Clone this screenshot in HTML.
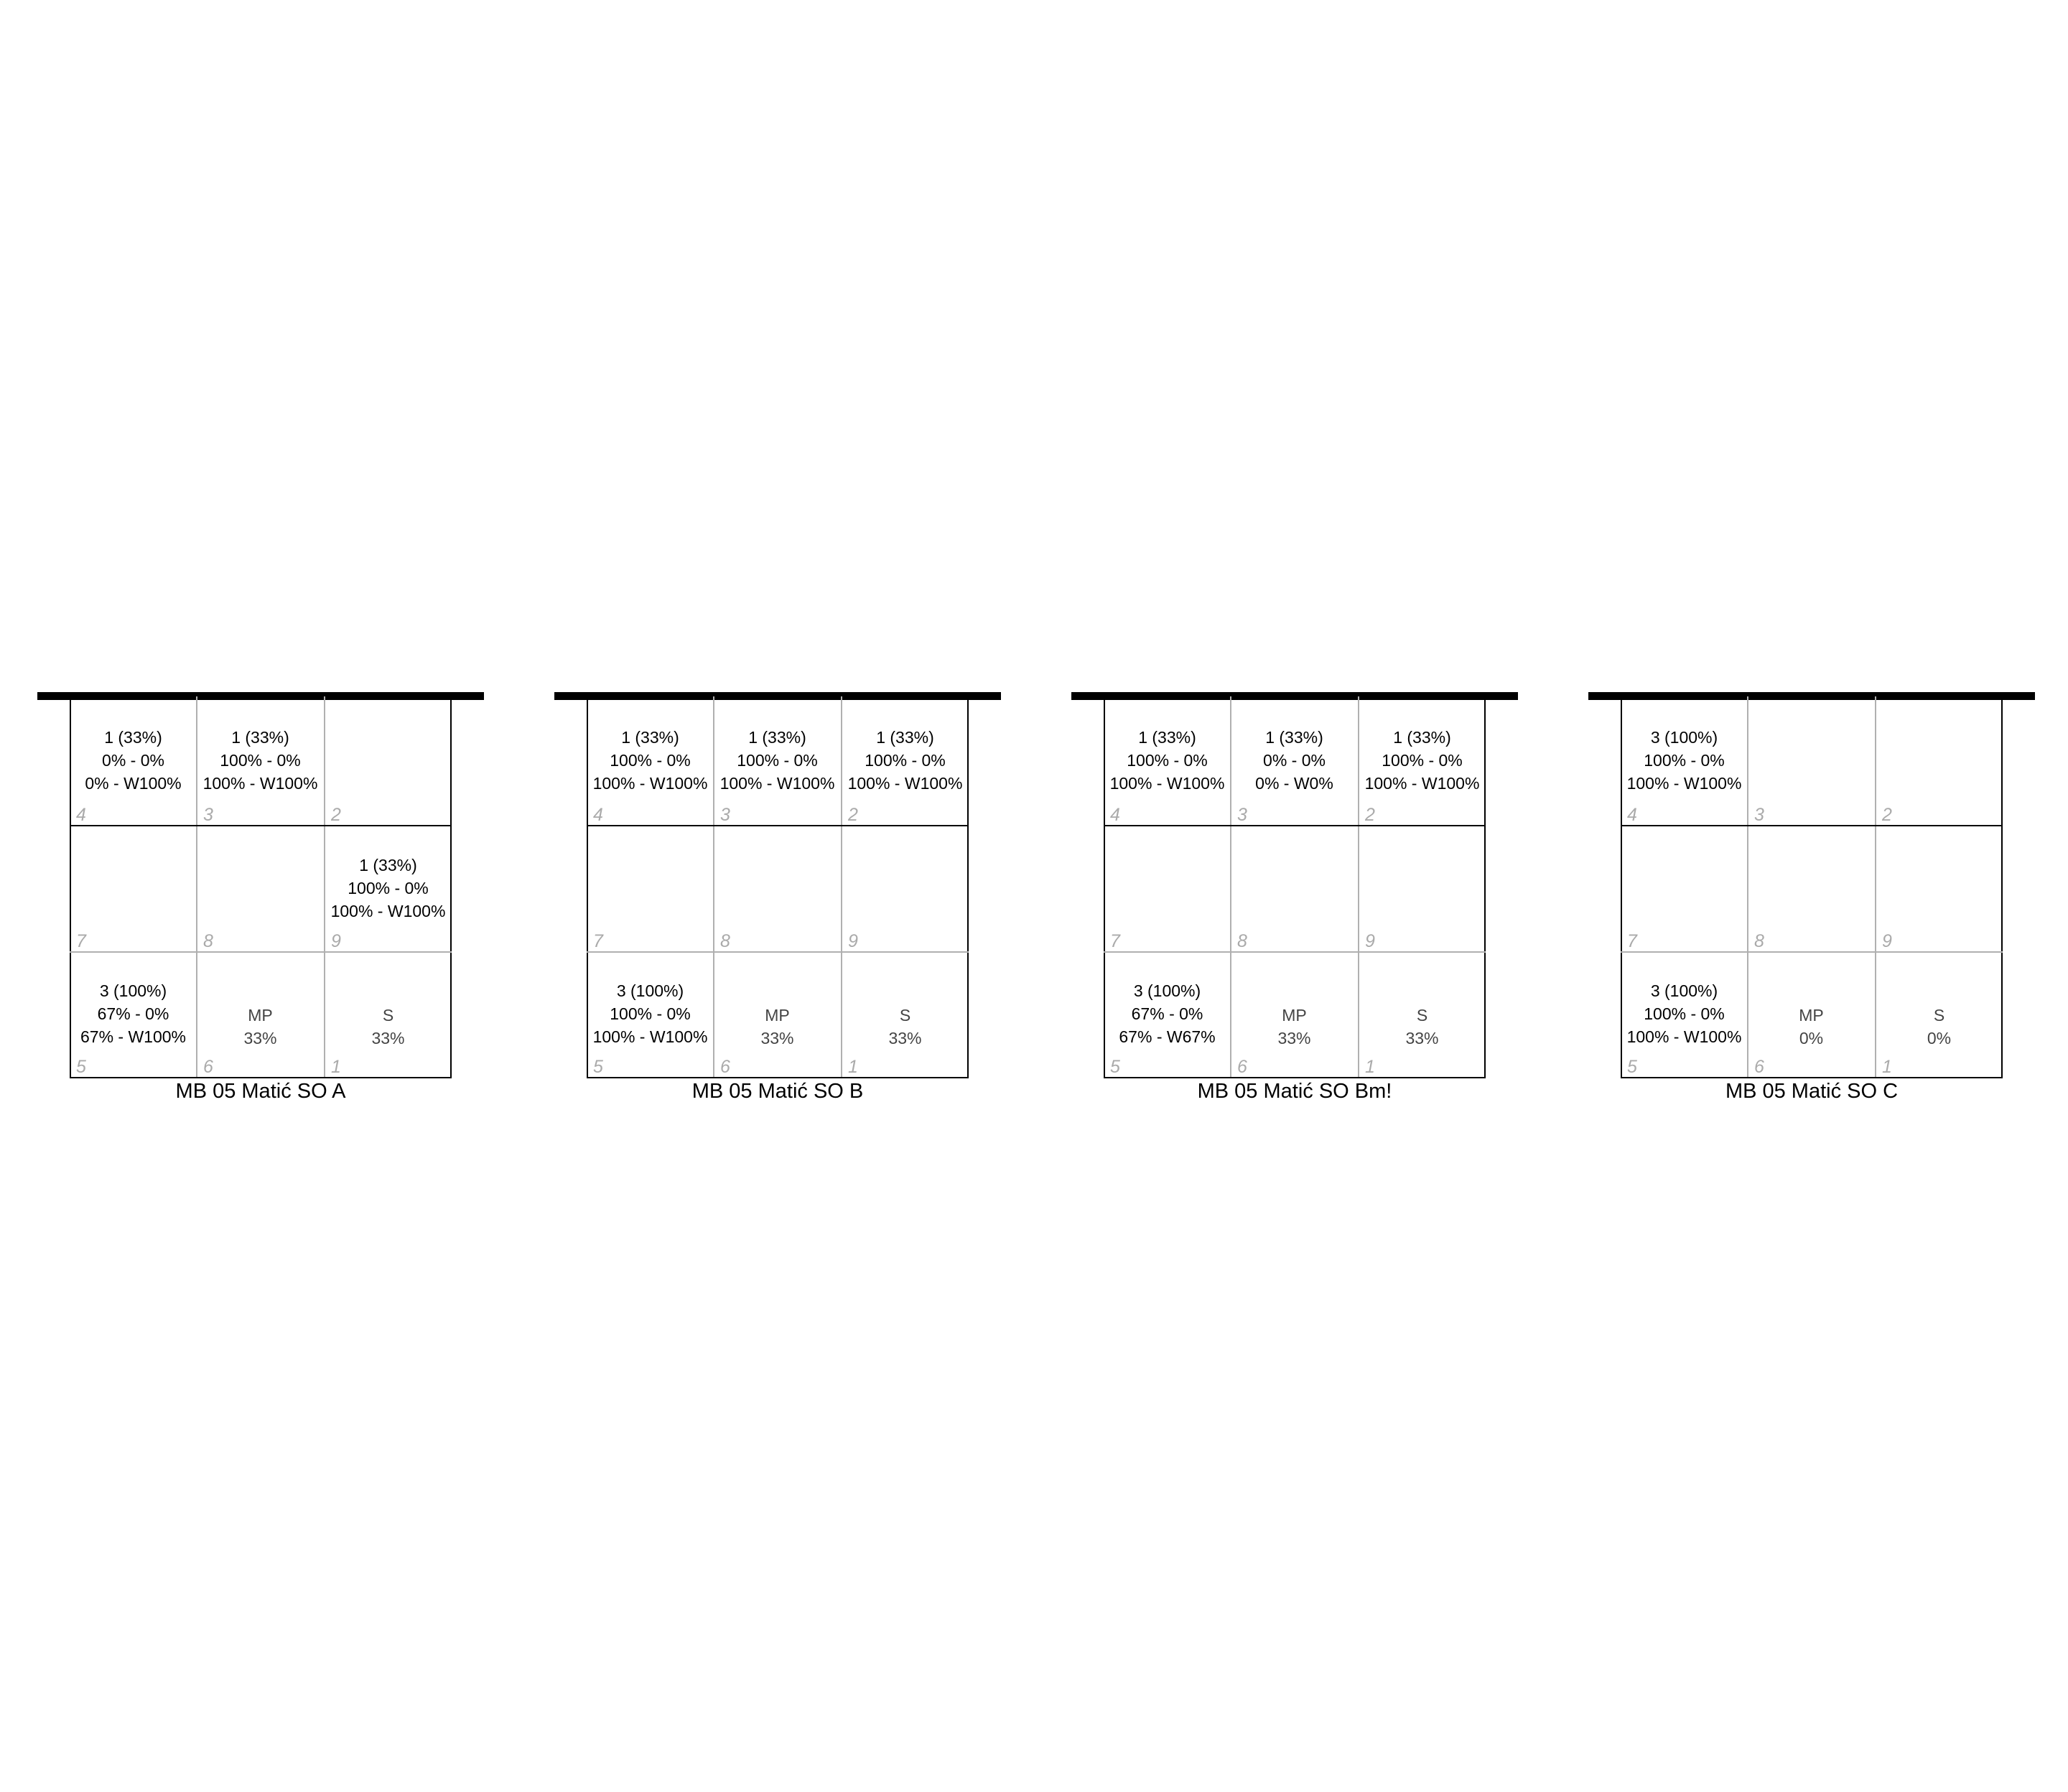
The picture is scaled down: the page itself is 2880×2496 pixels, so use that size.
<!DOCTYPE html>
<html><head><meta charset="utf-8"><style>
*{margin:0;padding:0;box-sizing:border-box}
body{width:2880px;height:2496px;background:#fff;position:relative;overflow:hidden;font-family:"Liberation Sans",sans-serif}
.d{position:absolute;top:0;width:720px;height:2496px}
.bar{position:absolute;left:52px;top:964px;width:622px;height:11px;background:#000}
.box{position:absolute;left:97px;top:975px;width:532px;height:527px;border:2px solid #000;border-top:none}
.vl{position:absolute;top:970px;width:2px;height:530px;background:#b0b0b0}
.hl{position:absolute;left:97px;width:532px;height:2px}
.c{position:absolute;width:177px;height:175px}
.t{position:absolute;left:0;right:0;top:38px;text-align:center;font-size:23px;line-height:32px;color:#000}
.r1 .t{top:36px}
.t.g{color:#444;top:72px}
.n{position:absolute;left:9px;bottom:2px;font-size:25px;font-style:italic;color:#aaa;line-height:1}
.lab{position:absolute;left:97px;width:532px;top:1505px;text-align:center;font-size:29px;line-height:30px;color:#000}
</style></head><body>

<div class="d" style="left:0">
<div class="bar"></div><div class="box"></div>
<div class="vl" style="left:273px"></div><div class="vl" style="left:451px"></div>
<div class="hl" style="top:1149px;background:#000"></div><div class="hl" style="top:1325px;background:#b0b0b0"></div>
<div class="c r1" style="left:97px;top:975px"><div class="t">1 (33%)<br>0% - 0%<br>0% - W100%</div><div class="n">4</div></div>
<div class="c r1" style="left:274px;top:975px"><div class="t">1 (33%)<br>100% - 0%<br>100% - W100%</div><div class="n">3</div></div>
<div class="c r1" style="left:452px;top:975px"><div class="n">2</div></div>
<div class="c" style="left:97px;top:1151px"><div class="n">7</div></div>
<div class="c" style="left:274px;top:1151px"><div class="n">8</div></div>
<div class="c" style="left:452px;top:1151px"><div class="t">1 (33%)<br>100% - 0%<br>100% - W100%</div><div class="n">9</div></div>
<div class="c" style="left:97px;top:1326px"><div class="t">3 (100%)<br>67% - 0%<br>67% - W100%</div><div class="n">5</div></div>
<div class="c" style="left:274px;top:1326px"><div class="t g">MP<br>33%</div><div class="n">6</div></div>
<div class="c" style="left:452px;top:1326px"><div class="t g">S<br>33%</div><div class="n">1</div></div>
<div class="lab">MB 05 Matić SO A</div>
</div>

<div class="d" style="left:720px">
<div class="bar"></div><div class="box"></div>
<div class="vl" style="left:273px"></div><div class="vl" style="left:451px"></div>
<div class="hl" style="top:1149px;background:#000"></div><div class="hl" style="top:1325px;background:#b0b0b0"></div>
<div class="c r1" style="left:97px;top:975px"><div class="t">1 (33%)<br>100% - 0%<br>100% - W100%</div><div class="n">4</div></div>
<div class="c r1" style="left:274px;top:975px"><div class="t">1 (33%)<br>100% - 0%<br>100% - W100%</div><div class="n">3</div></div>
<div class="c r1" style="left:452px;top:975px"><div class="t">1 (33%)<br>100% - 0%<br>100% - W100%</div><div class="n">2</div></div>
<div class="c" style="left:97px;top:1151px"><div class="n">7</div></div>
<div class="c" style="left:274px;top:1151px"><div class="n">8</div></div>
<div class="c" style="left:452px;top:1151px"><div class="n">9</div></div>
<div class="c" style="left:97px;top:1326px"><div class="t">3 (100%)<br>100% - 0%<br>100% - W100%</div><div class="n">5</div></div>
<div class="c" style="left:274px;top:1326px"><div class="t g">MP<br>33%</div><div class="n">6</div></div>
<div class="c" style="left:452px;top:1326px"><div class="t g">S<br>33%</div><div class="n">1</div></div>
<div class="lab">MB 05 Matić SO B</div>
</div>

<div class="d" style="left:1440px">
<div class="bar"></div><div class="box"></div>
<div class="vl" style="left:273px"></div><div class="vl" style="left:451px"></div>
<div class="hl" style="top:1149px;background:#000"></div><div class="hl" style="top:1325px;background:#b0b0b0"></div>
<div class="c r1" style="left:97px;top:975px"><div class="t">1 (33%)<br>100% - 0%<br>100% - W100%</div><div class="n">4</div></div>
<div class="c r1" style="left:274px;top:975px"><div class="t">1 (33%)<br>0% - 0%<br>0% - W0%</div><div class="n">3</div></div>
<div class="c r1" style="left:452px;top:975px"><div class="t">1 (33%)<br>100% - 0%<br>100% - W100%</div><div class="n">2</div></div>
<div class="c" style="left:97px;top:1151px"><div class="n">7</div></div>
<div class="c" style="left:274px;top:1151px"><div class="n">8</div></div>
<div class="c" style="left:452px;top:1151px"><div class="n">9</div></div>
<div class="c" style="left:97px;top:1326px"><div class="t">3 (100%)<br>67% - 0%<br>67% - W67%</div><div class="n">5</div></div>
<div class="c" style="left:274px;top:1326px"><div class="t g">MP<br>33%</div><div class="n">6</div></div>
<div class="c" style="left:452px;top:1326px"><div class="t g">S<br>33%</div><div class="n">1</div></div>
<div class="lab">MB 05 Matić SO Bm!</div>
</div>

<div class="d" style="left:2160px">
<div class="bar"></div><div class="box"></div>
<div class="vl" style="left:273px"></div><div class="vl" style="left:451px"></div>
<div class="hl" style="top:1149px;background:#000"></div><div class="hl" style="top:1325px;background:#b0b0b0"></div>
<div class="c r1" style="left:97px;top:975px"><div class="t">3 (100%)<br>100% - 0%<br>100% - W100%</div><div class="n">4</div></div>
<div class="c r1" style="left:274px;top:975px"><div class="n">3</div></div>
<div class="c r1" style="left:452px;top:975px"><div class="n">2</div></div>
<div class="c" style="left:97px;top:1151px"><div class="n">7</div></div>
<div class="c" style="left:274px;top:1151px"><div class="n">8</div></div>
<div class="c" style="left:452px;top:1151px"><div class="n">9</div></div>
<div class="c" style="left:97px;top:1326px"><div class="t">3 (100%)<br>100% - 0%<br>100% - W100%</div><div class="n">5</div></div>
<div class="c" style="left:274px;top:1326px"><div class="t g">MP<br>0%</div><div class="n">6</div></div>
<div class="c" style="left:452px;top:1326px"><div class="t g">S<br>0%</div><div class="n">1</div></div>
<div class="lab">MB 05 Matić SO C</div>
</div>

</body></html>
